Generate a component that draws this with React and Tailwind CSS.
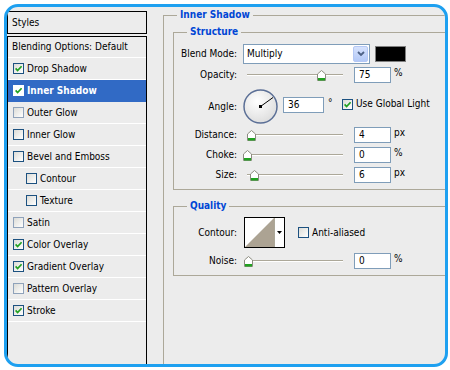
import React from "react";

const FONT = "font-['DejaVu_Sans_Condensed','DejaVu_Sans',sans-serif] font-stretch-condensed";

function Check({ checked, light }) {
  return (
    <span
      className={
        light
          ? "flex h-[11px] w-[11px] shrink-0 items-center justify-center border border-[#8fa2ba] bg-linear-to-br from-[#dcdcd7] to-white"
          : "flex h-[11px] w-[11px] shrink-0 items-center justify-center border border-[#1c5180] bg-linear-to-br from-[#dcdcd7] to-white"
      }
    >
      {checked && (
        <svg width="7" height="7" viewBox="0 0 7 7">
          <path d="M0.6 3.4 L2.6 5.6 L6.6 1.2" stroke="#21a121" strokeWidth="1.7" fill="none" />
        </svg>
      )}
    </span>
  );
}

const items = [
  { t: "Drop Shadow", c: true },
  { t: "Inner Shadow", c: true, sel: true },
  { t: "Outer Glow", c: false, light: true },
  { t: "Inner Glow", c: false },
  { t: "Bevel and Emboss", c: false },
  { t: "Contour", c: false, ind: true },
  { t: "Texture", c: false, ind: true },
  { t: "Satin", c: false, light: true },
  { t: "Color Overlay", c: true },
  { t: "Gradient Overlay", c: true },
  { t: "Pattern Overlay", c: false, light: true },
  { t: "Stroke", c: true },
];

function Row({ it }) {
  if (it.sel) {
    return (
      <div className="flex h-[22px] items-center gap-[3px] border-b border-[#316ac5] bg-[#316ac5] pl-[5px] font-bold text-white">
        <span className="flex h-[11px] w-[11px] shrink-0 items-center justify-center border border-white bg-white">
          <svg width="7" height="7" viewBox="0 0 7 7">
            <path d="M0.6 3.4 L2.6 5.6 L6.6 1.2" stroke="#21a121" strokeWidth="1.7" fill="none" />
          </svg>
        </span>
        <span>{it.t}</span>
      </div>
    );
  }
  return (
    <div
      className={
        it.ind
          ? "flex h-[22px] items-center gap-[3px] border-b border-white pl-[18px]"
          : "flex h-[22px] items-center gap-[3px] border-b border-white pl-[5px]"
      }
    >
      <Check checked={it.c} light={it.light} />
      <span>{it.t}</span>
    </div>
  );
}

function Thumb({ left }) {
  return (
    <svg
      className="absolute top-[3px]"
      style={{ left: left }}
      width="9"
      height="11"
      viewBox="0 0 9 11"
    >
      <path d="M0.5 4 L4.5 0.5 L8.5 4 V10.5 H0.5 Z" fill="#ffffff" stroke="#8c8c80" />
      <rect x="1" y="8" width="7" height="2.5" fill="#21a121" />
    </svg>
  );
}

function Slider({ left }) {
  return (
    <div className="relative ml-[6px] flex h-full w-[100px] items-center pl-[4px]">
      <div className="h-[2px] flex-1 border-t border-[#aca899] bg-white" />
      <Thumb left={left} />
    </div>
  );
}

function NumBox({ v, w }) {
  return (
    <div
      className={
        w
          ? "flex h-[16px] w-[41px] items-center border border-[#7f9db9] bg-white pl-[4px]"
          : "ml-[11px] flex h-[16px] w-[37px] items-center border border-[#7f9db9] bg-white pl-[4px]"
      }
    >
      {v}
    </div>
  );
}

function SliderRow({ label, left, v, unit, cls }) {
  return (
    <div className={cls}>
      <div className="w-[63px] text-right">{label}</div>
      <Slider left={left} />
      <NumBox v={v} />
      <span className="ml-[3px] self-start leading-[12px]">{unit}</span>
    </div>
  );
}

function Title({ children }) {
  return (
    <div className="-mt-[8px] ml-[13px] w-fit bg-[#ececec] px-[3px] leading-[14px] font-bold text-[#0046d5]">
      {children}
    </div>
  );
}

export default function App() {
  return (
    <div className={`h-[370px] w-[450px] bg-white pl-[4px] pt-[4px] text-[10px] leading-[12px] text-black ${FONT}`}>
      <div className="flex h-[363px] w-[444px] overflow-hidden rounded-[14px] border-[3px] border-[#1ea0f0] bg-[#ececec]">
        {/* left panel */}
        <div className="flex w-[140px] shrink-0 flex-col pt-[4px]">
          <div className="flex h-[23px] items-center border border-black px-[4px]">Styles</div>
          <div className="mt-[2px] flex-1 border-x border-t border-black">
            <div className="flex h-[21px] items-center border-b border-white pl-[4px]">
              Blending Options: Default
            </div>
            {items.map((it) => (
              <Row key={it.t} it={it} />
            ))}
          </div>
        </div>

        {/* right panel */}
        <div className="flex-1 pl-[16px] pt-[8px]">
          <div className="h-full border-l border-t border-[#aca899]">
            <Title>Inner Shadow</Title>

            {/* Structure */}
            <div className="ml-[9px] mt-[10px] border-y border-l border-[#aca899] pb-[6px]">
              <Title>Structure</Title>

              <div className="mt-[5px] flex h-[20px] items-center">
                <div className="w-[63px] text-right">Blend Mode:</div>
                <div className="ml-[6px] flex h-[20px] w-[127px] items-center border border-[#7f9db9] bg-white">
                  <span className="flex-1 pl-[3px]">Multiply</span>
                  <div className="m-[1px] flex h-[16px] w-[15px] items-center justify-center rounded-[2px] border border-[#b4c8f5] bg-linear-to-b from-[#d6e2fd] to-[#b3c9f7]">
                    <svg width="8" height="6" viewBox="0 0 8 6">
                      <path d="M1 1 L4 4 L7 1" stroke="#4d6185" strokeWidth="1.8" fill="none" />
                    </svg>
                  </div>
                </div>
                <div className="ml-[5px] h-[16px] w-[31px] border border-[#808080] bg-black" />
              </div>

              <SliderRow
                cls="mt-[3px] flex h-[16px] items-center"
                label="Opacity:"
                left={74}
                v="75"
                unit="%"
              />

              <div className="mt-[6px] flex h-[35px]">
                <div className="w-[63px] self-center text-right">Angle:</div>
                <svg className="ml-[6px]" width="35" height="35" viewBox="0 0 35 35">
                  <defs>
                    <radialGradient id="dialg" cx="40%" cy="35%" r="70%">
                      <stop offset="0%" stopColor="#ffffff" />
                      <stop offset="100%" stopColor="#dcdcdc" />
                    </radialGradient>
                  </defs>
                  <circle cx="17.5" cy="17.5" r="16.5" fill="url(#dialg)" stroke="#5b6f96" strokeWidth="1.5" />
                  <line x1="17.5" y1="17.5" x2="30" y2="8.5" stroke="#000" strokeWidth="1" />
                  <rect x="16" y="16" width="3" height="3" fill="#000" />
                </svg>
                <div className="ml-[5px] mt-[8px] self-start">
                  <NumBox v="36" w />
                </div>
                <span className="mt-[8px] w-[18px] self-start pl-[4px]">°</span>
                <div className="mt-[9px] flex items-center gap-[3px] self-start">
                  <Check checked />
                  <span>Use Global Light</span>
                </div>
              </div>

              <SliderRow cls="mt-[3px] flex h-[16px] items-center" label="Distance:" left={4} v="4" unit="px" />
              <SliderRow cls="mt-[4px] flex h-[16px] items-center" label="Choke:" left={0} v="0" unit="%" />
              <SliderRow cls="mt-[4px] flex h-[16px] items-center" label="Size:" left={7} v="6" unit="px" />
            </div>

            {/* Quality */}
            <div className="ml-[9px] mt-[16px] border-y border-l border-[#aca899] pb-[6px]">
              <Title>Quality</Title>
              <div className="mt-[4px] flex h-[31px] items-center">
                <div className="w-[63px] text-right">Contour:</div>
                <div className="ml-[7px] flex h-[31px] w-[41px] border border-black bg-white">
                  <svg width="29" height="29" viewBox="0 0 29 29">
                    <path d="M0 29 L29 0 L29 29 Z" fill="#aca393" />
                  </svg>
                  <div className="flex flex-1 items-center justify-center border-l border-[#aca899]">
                    <svg width="5" height="3" viewBox="0 0 5 3">
                      <path d="M0 0 H5 L2.5 3 Z" fill="#000" />
                    </svg>
                  </div>
                </div>
                <div className="ml-[13px] flex items-center gap-[3px]">
                  <Check />
                  <span>Anti-aliased</span>
                </div>
              </div>
              <SliderRow cls="mt-[5px] flex h-[16px] items-center" label="Noise:" left={1} v="0" unit="%" />
            </div>
          </div>
        </div>
      </div>
    </div>
  );
}
